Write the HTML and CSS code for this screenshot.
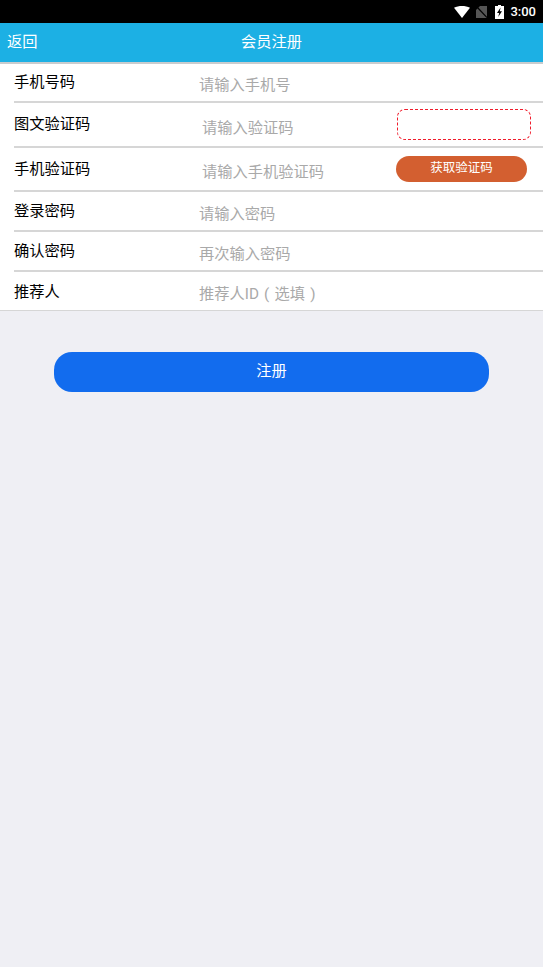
FILE: index.html
```html
<!DOCTYPE html>
<html lang="zh">
<head>
    <meta charset="utf-8">
    <title>会员注册</title>
    <link rel="stylesheet" href="styles.css">
</head>
<body>
    <div class="status-bar">
        <svg class="status-icon" width="16" height="12" viewBox="0 0 16 12"><path d="M0 1.8 C4.5 -0.6 11.5 -0.6 16 1.8 L8 12 Z" fill="#fff"/></svg>
        <svg class="status-icon status-sim" width="11" height="12" viewBox="0 0 11 12"><path d="M4 0 H11 V12 H0 V4 Z" fill="#555"/><path d="M0.5 0.5 L11 11.5" stroke="#000" stroke-width="1.2"/></svg>
        <svg class="status-icon" width="9" height="14" viewBox="0 0 9 14"><path d="M3 0 H6 V1 H9 V14 H0 V1 H3 Z" fill="#fff"/><path d="M5.6 2.5 L2 8 H4.2 L3.2 12 L7 6.2 H4.8 Z" fill="#000"/></svg>
        <span class="status-time">3:00</span>
    </div>

    <div class="header">
        <span class="header-back">返回</span>
        <span class="header-title">会员注册</span>
    </div>

    <div class="form">
        <div class="row row-phone">
            <span class="row-label">手机号码</span>
            <input class="row-input" type="text" placeholder="请输入手机号">
        </div>
        <div class="row row-captcha">
            <span class="row-label">图文验证码</span>
            <input class="row-input row-input-code" type="text" placeholder="请输入验证码">
            <div class="captcha"></div>
        </div>
        <div class="row row-sms">
            <span class="row-label">手机验证码</span>
            <input class="row-input row-input-code" type="text" placeholder="请输入手机验证码">
            <button class="sms-button">获取验证码</button>
        </div>
        <div class="row row-plain">
            <span class="row-label">登录密码</span>
            <input class="row-input" type="text" placeholder="请输入密码">
        </div>
        <div class="row row-plain">
            <span class="row-label">确认密码</span>
            <input class="row-input" type="text" placeholder="再次输入密码">
        </div>
        <div class="row row-last">
            <span class="row-label">推荐人</span>
            <input class="row-input" type="text" placeholder="推荐人ID&#8196;(&#8196;选填&#8196;)">
        </div>
    </div>

    <div class="submit-wrap">
        <button class="submit-button">注册</button>
    </div>
</body>
</html>
```

FILE: styles.css
```css
html, body
{
    margin: 0;
    height: 100%;
}

body
{
    width: 543px;
    height: 967px;
    overflow: hidden;
    background-color: #efeff4;
    font-family: "Roboto", "Noto Sans CJK SC", sans-serif;
    font-size: 15.25px;
}

.status-bar
{
    height: 23px;
    background-color: #000;
    display: flex;
    align-items: center;
    justify-content: flex-end;
    padding-right: 7px;
}

.status-icon
{
    margin-right: 6px;
    flex: none;
}

.status-sim
{
    margin-right: 8px;
}

.status-time
{
    color: #fff;
    font-size: 13px;
    font-weight: 500;
}

.header
{
    height: 33px;
    padding-bottom: 6px;
    background-color: #1cb0e4;
    color: #fff;
    display: flex;
    align-items: center;
    justify-content: center;
    position: relative;
    border-bottom: 2px solid #c9ccce;
}

.header-back
{
    position: absolute;
    left: 7px;
}

.form
{
    background-color: #fff;
    border-bottom: 1px solid #d6d6d6;
    padding-left: 14px;
}

.row
{
    display: flex;
    align-items: center;
    border-bottom: 2px solid #d6d6d6;
    box-sizing: border-box;
}

.row-phone
{
    height: 39px;
}

.row-captcha
{
    height: 45px;
}

.row-sms
{
    height: 44px;
}

.row-plain
{
    height: 40px;
}

.row-last
{
    height: 38px;
    border-bottom: none;
}

.row-label
{
    width: 185px;
    flex: none;
    color: #000;
    margin-top: -5px;
}

.row-last .row-label
{
    margin-top: -3px;
}

.row-input
{
    flex: none;
    width: 190px;
    border: none;
    outline: none;
    padding: 0;
    background: none;
    font-family: inherit;
    font-size: 15.25px;
    margin-top: 5px;
}

.row-input::placeholder
{
    color: #a9a9a9;
}

.row-input-code
{
    margin-left: 3px;
    margin-top: 6px;
}

.captcha
{
    width: 134px;
    height: 31px;
    box-sizing: border-box;
    border: 1px dashed #f01c2c;
    border-radius: 8px;
    margin-left: 5px;
}

.sms-button
{
    width: 131px;
    height: 26px;
    border: none;
    border-radius: 13px;
    background-color: #d35f30;
    color: #fff;
    font-family: inherit;
    font-size: 12.5px;
    padding: 0 0 5px;
    margin-left: 4px;
    margin-top: -1px;
}

.submit-wrap
{
    display: flex;
    justify-content: center;
    padding-top: 41px;
}

.submit-button
{
    width: 435px;
    height: 40px;
    border: none;
    border-radius: 18px;
    background-color: #126cee;
    color: #fff;
    font-family: inherit;
    font-size: 15.25px;
    padding: 0 0 7px;
}
```
